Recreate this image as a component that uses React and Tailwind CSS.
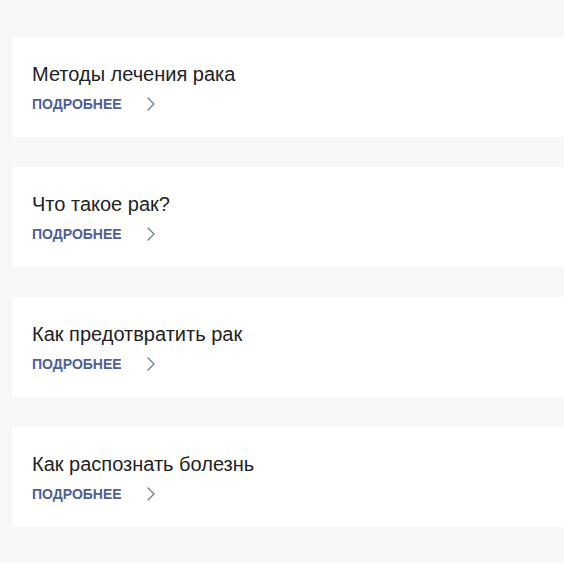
const items = [
  'Методы лечения рака',
  'Что такое рак?',
  'Как предотвратить рак',
  'Как распознать болезнь',
]

function Chevron() {
  return (
    <svg width="8" height="14" viewBox="0 0 8 14" fill="none" stroke="currentColor" strokeWidth="1.3" strokeLinecap="round" strokeLinejoin="round">
      <polyline points="1,1 7,7 1,13" />
    </svg>
  )
}

export default function App() {
  return (
    <div className="min-h-[563px] bg-[#f7f7f7] pt-[37px] pl-3 flex flex-col gap-[30px]" style={{ fontFamily: '"Liberation Sans", Arial, sans-serif' }}>
      {items.map((title) => (
        <article key={title} className="h-[100px] bg-white pl-5 pt-[26px]">
          <h3 className="text-[20px] leading-[23px] text-[#222]">{title}</h3>
          <a href="#" className="mt-[8px] flex items-center text-[#4e6096]">
            <span className="text-[14px] leading-[20px] font-bold">ПОДРОБНЕЕ</span>
            <span className="ml-[25px] text-[#6a78a0]"><Chevron /></span>
          </a>
        </article>
      ))}
    </div>
  )
}
